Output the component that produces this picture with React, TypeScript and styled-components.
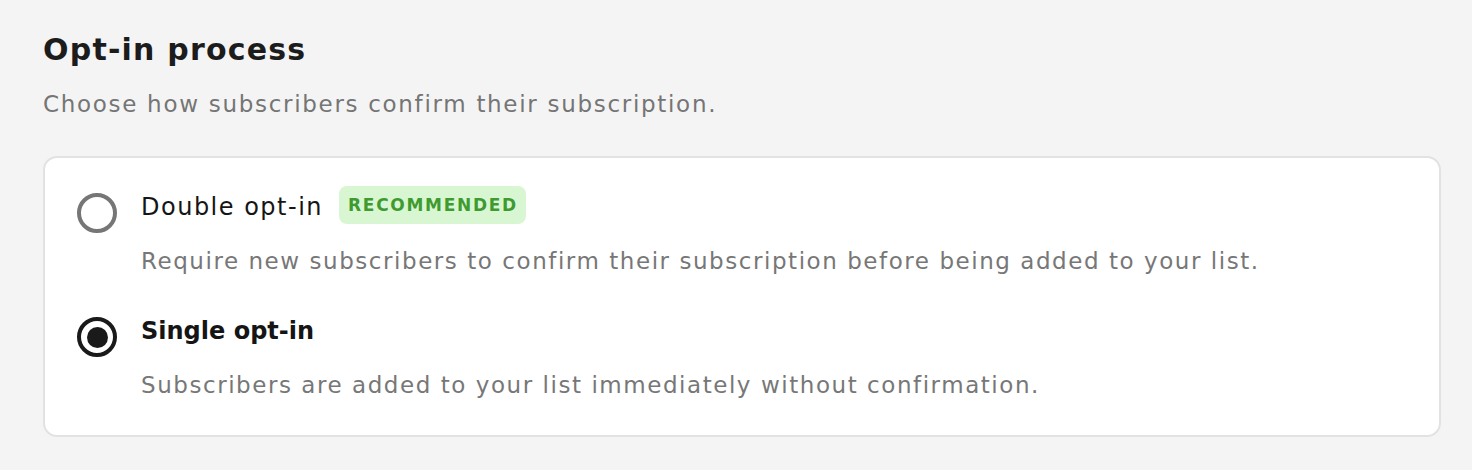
import styled, { createGlobalStyle } from "styled-components";

const GlobalStyle = createGlobalStyle`
  html, body {
    margin: 0;
    padding: 0;
    background: #f4f4f4;
  }
  body {
    font-family: "DejaVu Sans", Inter, sans-serif;
    color: #1a1a1a;
  }
`;

const Page = styled.div`
  display: flex;
  flex-direction: column;
  padding: 30px 31px 0 43px;
`;

const Title = styled.h2`
  margin: 0;
  font-size: 30px;
  line-height: 40px;
  font-weight: 600;
  letter-spacing: 1.2px;
  color: #1c1c1c;
`;

const Subtitle = styled.p`
  margin: 18px 0 0;
  font-size: 23px;
  line-height: 32px;
  letter-spacing: 1.7px;
  color: #757575;
`;

const Card = styled.div`
  margin-top: 36px;
  background: #fff;
  border: 2px solid #e2e2e2;
  border-radius: 14px;
  padding: 28px 32px 34px;
  display: flex;
  flex-direction: column;
  gap: 33px;
`;

const Option = styled.label`
  display: grid;
  grid-template-columns: 40px 1fr;
  column-gap: 24px;
  row-gap: 12px;
  cursor: pointer;
`;

const Radio = styled.span<{ $checked?: boolean }>`
  box-sizing: border-box;
  width: 40px;
  height: 40px;
  margin-top: 7px;
  border-radius: 50%;
  border: 4px solid ${(p) => (p.$checked ? "#1a1a1a" : "#767676")};
  display: grid;
  place-items: center;

  &::after {
    content: "";
    width: 21px;
    height: 21px;
    border-radius: 50%;
    background: #1a1a1a;
    display: ${(p) => (p.$checked ? "block" : "none")};
  }
`;

const LabelRow = styled.div`
  display: flex;
  align-items: center;
  gap: 16px;
  height: 38px;
`;

const LabelText = styled.span<{ $bold?: boolean }>`
  padding-top: 4px;
  font-size: 24px;
  font-weight: ${(p) => (p.$bold ? 600 : 400)};
  letter-spacing: ${(p) => (p.$bold ? "0" : "1.5px")};
  color: #151515;
`;

const Badge = styled.span`
  display: inline-flex;
  align-items: center;
  height: 38px;
  padding: 0 8px 0 9px;
  border-radius: 8px;
  background: #d9f6d3;
  color: #3f9a2f;
  font-size: 17px;
  font-weight: 700;
  letter-spacing: 1.7px;
`;

const Description = styled.div`
  grid-column: 2;
  font-size: 23px;
  line-height: 32px;
  letter-spacing: 1.55px;
  color: #777;
`;

const options = [
  {
    label: "Double opt-in",
    badge: "RECOMMENDED",
    description:
      "Require new subscribers to confirm their subscription before being added to your list.",
    checked: false,
  },
  {
    label: "Single opt-in",
    description: "Subscribers are added to your list immediately without confirmation.",
    checked: true,
  },
];

export default function App() {
  return (
    <>
      <GlobalStyle />
      <Page>
        <Title>Opt-in process</Title>
        <Subtitle>Choose how subscribers confirm their subscription.</Subtitle>
        <Card>
          {options.map((o) => (
            <Option key={o.label}>
              <Radio $checked={o.checked} />
              <LabelRow>
                <LabelText $bold={o.checked}>{o.label}</LabelText>
                {o.badge && <Badge>{o.badge}</Badge>}
              </LabelRow>
              <Description>{o.description}</Description>
            </Option>
          ))}
        </Card>
      </Page>
    </>
  );
}
